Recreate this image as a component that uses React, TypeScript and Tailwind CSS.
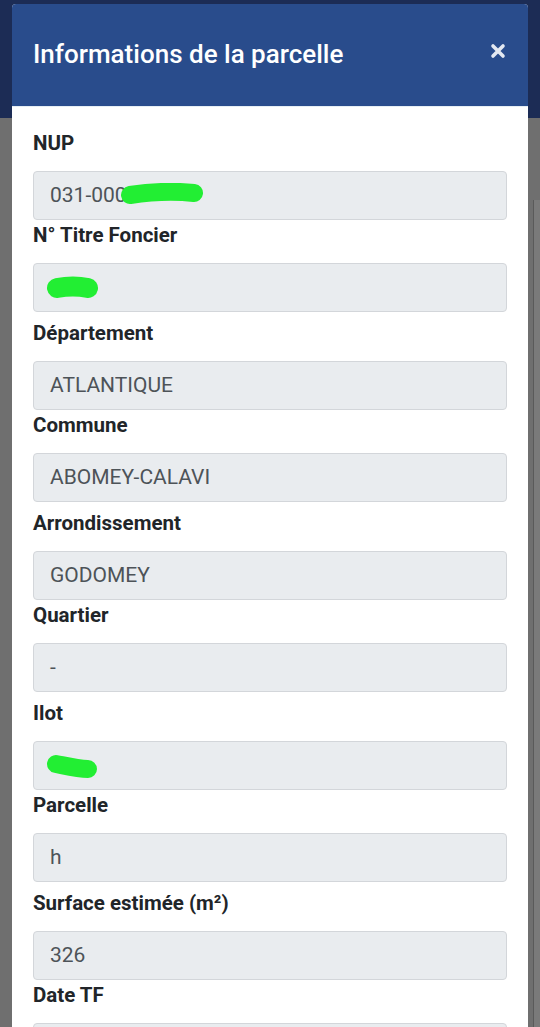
import React from "react";

// champs de la fiche parcelle, deux par rangée
const rows: { label: string; value: string; mask?: "nup" | "tf" | "ilot" }[][] = [
  [
    { label: "NUP", value: "031-000", mask: "nup" },
    { label: "N° Titre Foncier", value: "", mask: "tf" },
  ],
  [
    { label: "Département", value: "ATLANTIQUE" },
    { label: "Commune", value: "ABOMEY-CALAVI" },
  ],
  [
    { label: "Arrondissement", value: "GODOMEY" },
    { label: "Quartier", value: "-" },
  ],
  [
    { label: "Ilot", value: "", mask: "ilot" },
    { label: "Parcelle", value: "h" },
  ],
  [
    { label: "Surface estimée (m²)", value: "326" },
    { label: "Date TF", value: "" },
  ],
];

function Mask({ kind }: { kind: "nup" | "tf" | "ilot" }) {
  if (kind === "nup") {
    return (
      <svg className="absolute left-[86px] top-[11px]" width="84" height="24" viewBox="0 0 84 24">
        <path d="M10 12 C 30 9, 55 8, 74 10" stroke="#22ee33" strokeWidth="18" strokeLinecap="round" fill="none" />
      </svg>
    );
  }
  if (kind === "tf") {
    return (
      <svg className="absolute left-[12px] top-[11px]" width="54" height="26" viewBox="0 0 54 26">
        <path d="M11 13 C 22 11, 32 11, 42 13" stroke="#22ee33" strokeWidth="20" strokeLinecap="round" fill="none" />
      </svg>
    );
  }
  return (
    <svg className="absolute left-[12px] top-[11px]" width="54" height="28" viewBox="0 0 54 28">
      <path d="M10 11 C 20 13, 32 16, 42 16" stroke="#22ee33" strokeWidth="18" strokeLinecap="round" fill="none" />
    </svg>
  );
}

function Field({ label, value, mask }: { label: string; value: string; mask?: "nup" | "tf" | "ilot" }) {
  return (
    <div className="flex flex-col">
      <label className="text-[20.5px] leading-[24px] font-bold text-[#212529] mb-[16px]">{label}</label>
      <div className="relative h-[49px] rounded-[4px] border border-[#d3d6da] bg-[#e9ecef] px-[16px] flex items-center text-[21px] text-[#4d5358]">
        {value}
        {mask && <Mask kind={mask} />}
      </div>
    </div>
  );
}

export default function App() {
  return (
    <div
      className="relative w-[540px] h-[1027px] overflow-hidden bg-[#6f6f6f]"
      style={{ fontFamily: "Roboto, 'Liberation Sans', sans-serif" }}
    >
      {/* fond de page derrière la modale */}
      <div className="absolute inset-x-0 top-0 h-[118px] bg-[#1c2c55]" />
      <div className="absolute right-0 top-[200px] bottom-0 w-[7px] bg-[#7a7a7a] border-l border-[#5a5a5a]" />

      <div className="relative mx-[12px] mt-[4px] w-[516px] rounded-t-[4px] bg-white">
        <div className="h-[102px] bg-[#294c8c] rounded-t-[4px] flex items-center justify-between px-[21px] pb-[2px]">
          <h1 className="text-[26px] font-medium text-white">Informations de la parcelle</h1>
          <svg width="16" height="16" viewBox="0 0 16 16" className="mr-[1px] mb-[6px]">
            <path d="M3 3 L13 13 M13 3 L3 13" stroke="#e3e8f1" strokeWidth="3.6" strokeLinecap="round" />
          </svg>
        </div>
        <div className="border-t border-[#e6eef4] px-[21px] pt-[24px] flex flex-col gap-[9px]">
          {rows.map((pair, i) => (
            <div key={i} className="flex flex-col gap-[3px]">
              {pair.map((f) => (
                <Field key={f.label} {...f} />
              ))}
            </div>
          ))}
        </div>
      </div>
    </div>
  );
}
